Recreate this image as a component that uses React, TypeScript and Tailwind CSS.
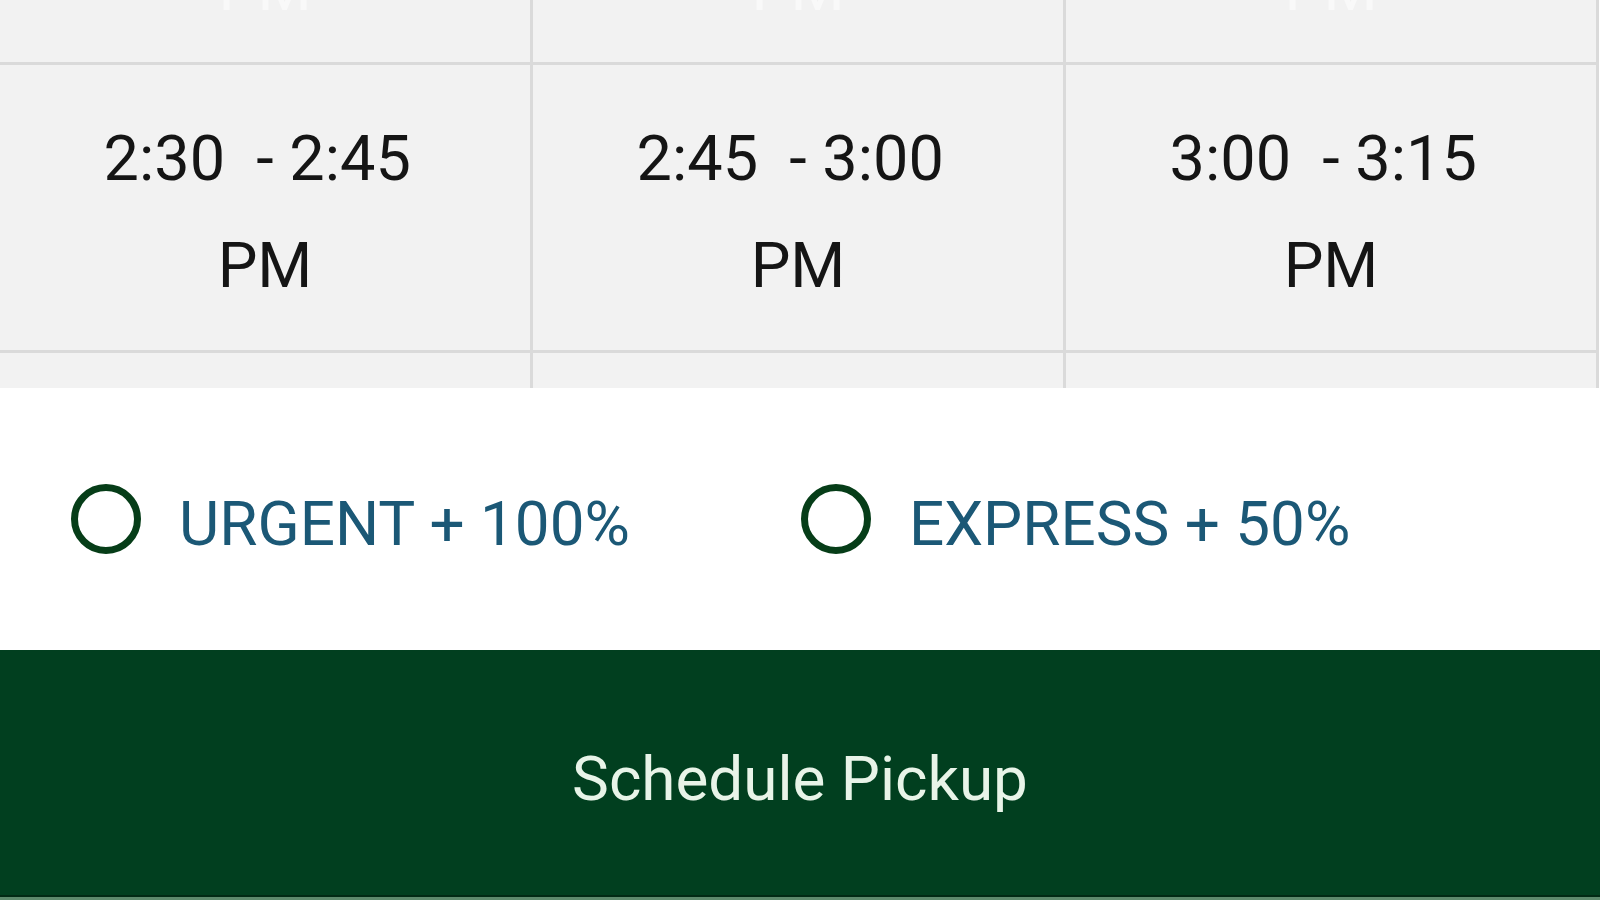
import React from "react";

const slots = [
  { from: "2:30", to: "2:45" },
  { from: "2:45", to: "3:00" },
  { from: "3:00", to: "3:15" },
];

function Radio({ label }: { label: string }) {
  return (
    <label className="flex items-center gap-[38px] cursor-pointer">
      <span className="w-[70px] h-[70px] rounded-full border-[7px] border-[#063d18] shrink-0" />
      <span className="text-[62px] leading-none text-[#1b5876] pt-[10px]">{label}</span>
    </label>
  );
}

export default function App() {
  return (
    <div className="w-[1600px] h-[900px] overflow-hidden bg-white flex flex-col font-['Roboto',sans-serif]">
      <div className="h-[388px] shrink-0 overflow-hidden bg-[#f2f2f2] flex flex-col w-[1599px]">
        <div className="h-[62px] shrink-0 grid grid-cols-3 overflow-hidden">
          {slots.map((s, i) => (
            <div key={i} className="border-r-[3px] border-[#dadada] flex justify-center">
              <span className="-mt-[42px] text-[62px] leading-[62px] text-[#f9f9f9]">PM</span>
            </div>
          ))}
        </div>
        <div className="h-[3px] shrink-0 bg-[#dadada]" />
        <div className="h-[285px] shrink-0 grid grid-cols-3">
          {slots.map((s, i) => (
            <div
              key={i}
              className="border-r-[3px] border-[#dadada] flex flex-col items-center justify-center pt-[8px] text-[63px] leading-[107px] text-[#151515]"
            >
              <span className="whitespace-pre">{`${s.from}  - ${s.to} `}</span>
              <span>PM</span>
            </div>
          ))}
        </div>
        <div className="h-[3px] shrink-0 bg-[#dadada]" />
        <div className="flex-1 grid grid-cols-3">
          {slots.map((_, i) => (
            <div key={i} className="border-r-[3px] border-[#dadada]" />
          ))}
        </div>
      </div>

      <div className="h-[262px] shrink-0 flex items-center pl-[71px]">
        <div className="w-[730px]">
          <Radio label="URGENT + 100%" />
        </div>
        <Radio label="EXPRESS + 50%" />
      </div>

      <button className="h-[247px] shrink-0 w-full bg-[#013f1f] text-[#e8f4e8] text-[62px] leading-none flex items-center justify-center pt-[12px] border-b-[2px] border-[#012a14]">
        Schedule Pickup
      </button>
      <div className="flex-1 bg-[#5d8a6c]" />
    </div>
  );
}
